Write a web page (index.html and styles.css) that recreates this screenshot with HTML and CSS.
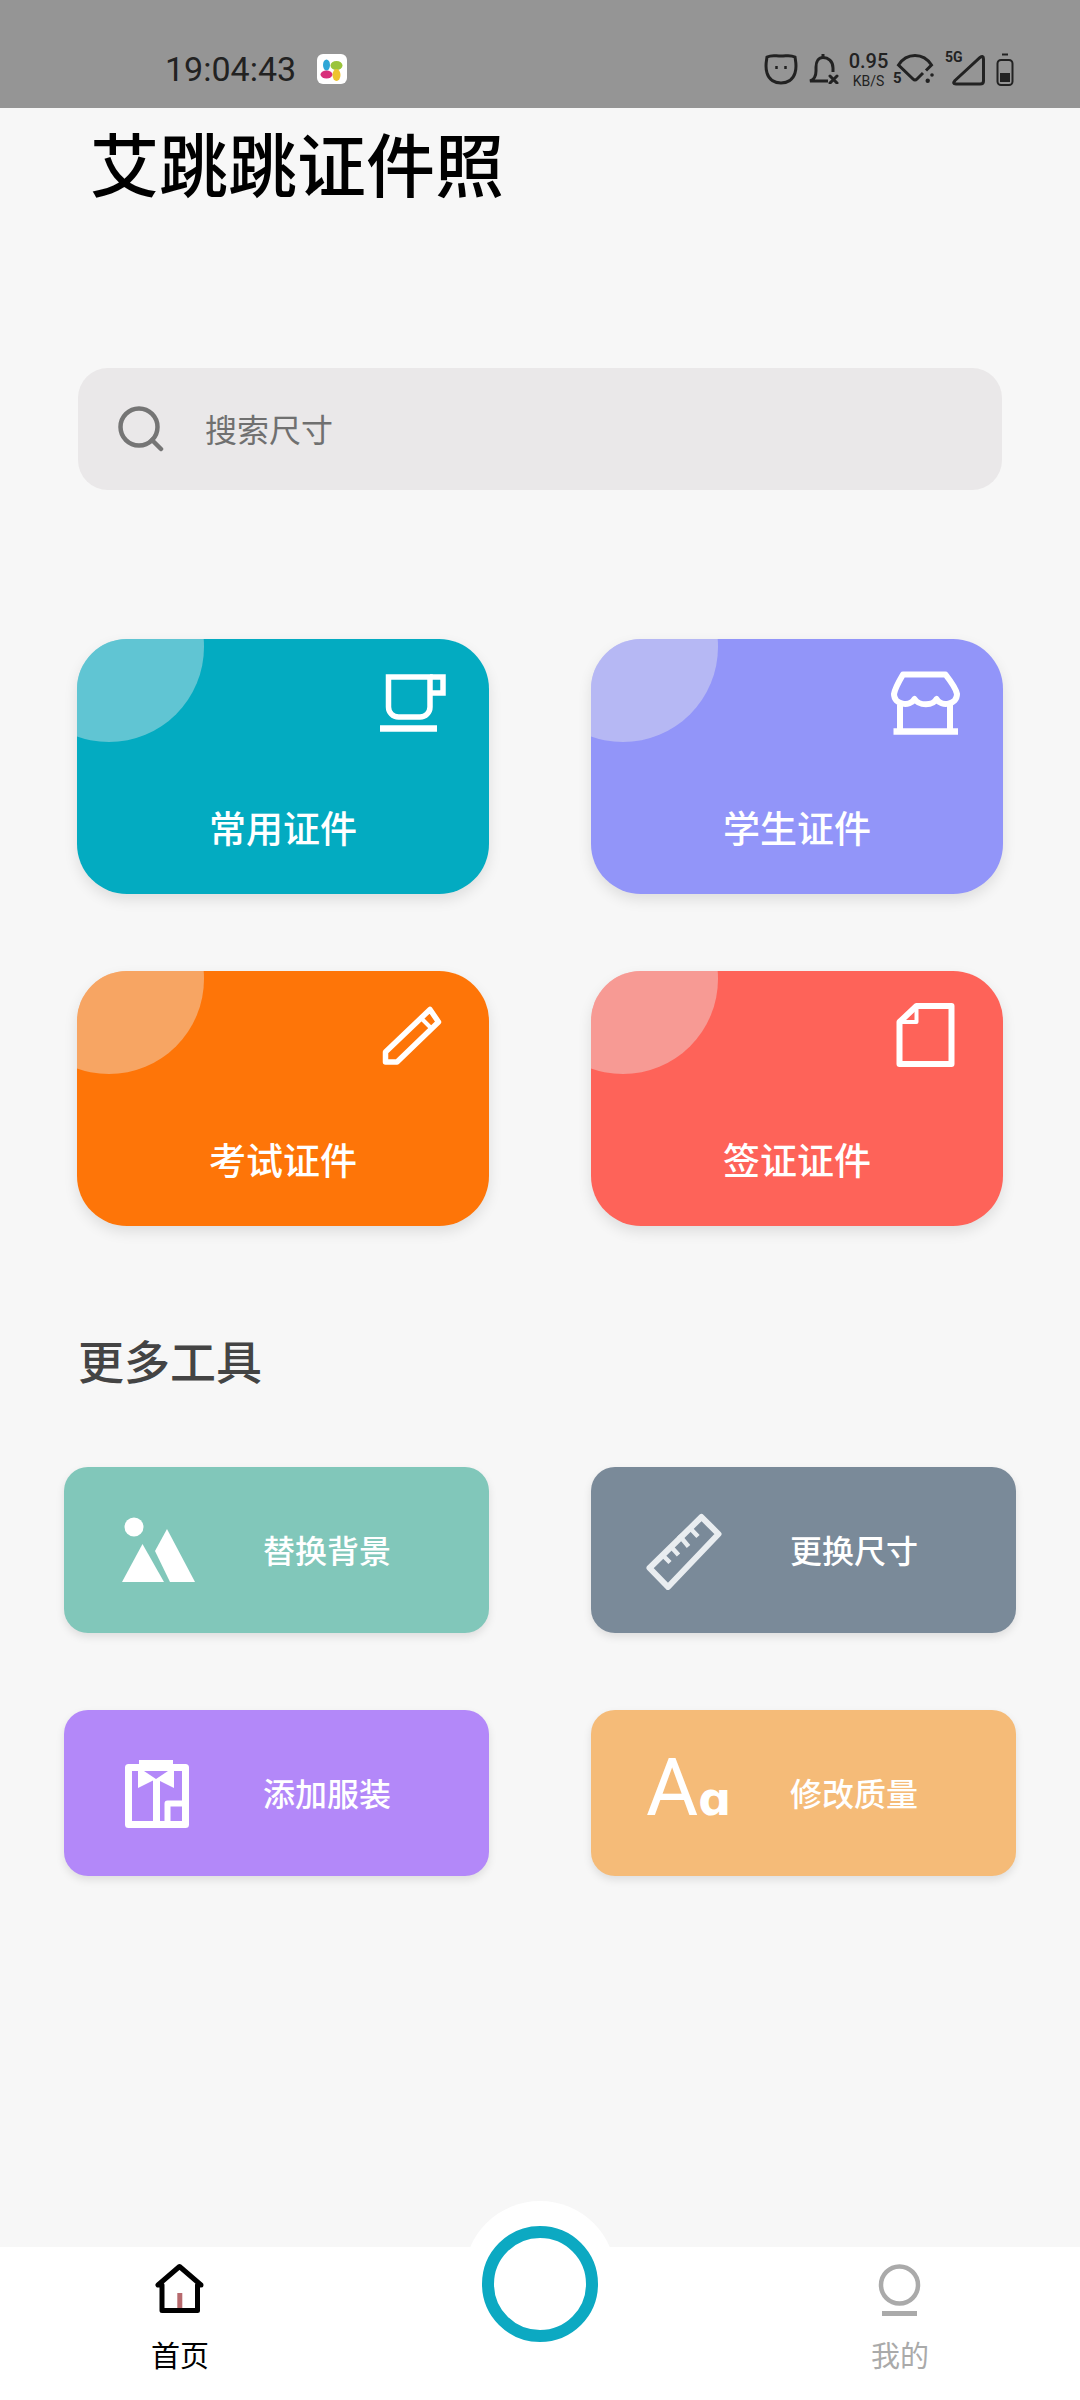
FILE: index.html
```html
<!DOCTYPE html>
<html lang="zh-CN">
<head>
  <meta charset="UTF-8">
  <meta name="viewport" content="width=device-width, initial-scale=1.0">
  <title>艾跳跳证件照</title>
  <link rel="stylesheet" href="styles.css">
</head>
<body>
<div class="page">

  <!-- status bar -->
  <div class="status-bar">
    <span class="clock">19:04:43</span>
    <svg class="app-icon" viewBox="0 0 30 30">
      <rect width="30" height="30" rx="6" fill="#fff"/>
      <ellipse cx="9.500" cy="11" rx="3.500" ry="5.500" fill="#2fa6d6"/>
      <ellipse cx="19.500" cy="11.500" rx="6" ry="4.500" fill="#9ac43c"/>
      <ellipse cx="9.500" cy="20.500" rx="6" ry="4" fill="#d8307a"/>
      <ellipse cx="19.500" cy="21" rx="4" ry="6" fill="#eec42e"/>
    </svg>
    <div class="status-icons">
      <svg class="st-cat" viewBox="0 0 34 32" fill="none" stroke="#222" stroke-width="3">
        <path d="M3 4C8 1.500 11 3 17 3C23 3 26 1.500 31 4C32 10 33 14 31 20C29 27 23 30 17 30C11 30 5 27 3 20C1 14 2 10 3 4Z"/>
        <path d="M12.500 13V16M21.500 13V16" stroke-width="2.500"/>
      </svg>
      <svg class="st-bell" viewBox="0 0 31 30" fill="none" stroke="#222" stroke-width="3">
        <path d="M20 27H2Q8 25 8 17V13C8 7 11 3.500 15 3.500C20 3.500 25 7 25 14V18"/>
        <path d="M15 0.500V3.500M22 22L29 29M29 22L22 29" stroke-linecap="round"/>
      </svg>
      <div class="st-speed">
        <span class="speed-num">0.95</span>
        <span class="speed-unit">KB/S</span>
      </div>
      <div class="st-wifi">
        <svg viewBox="0 0 42 32" fill="none" stroke="#222" stroke-width="3">
          <path d="M30 20L24 26Q22 28 20 26L5.500 12C10 5 16 2.500 22 2.500C28 2.500 34 5 38.500 12L33 17.500"/>
          <circle cx="39" cy="22" r="1.800" fill="#222" stroke="none"/>
          <circle cx="34.700" cy="27.700" r="2.200" fill="#222" stroke="none"/>
        </svg>
        <span class="wifi-num">5</span>
      </div>
      <div class="st-signal">
        <svg viewBox="0 0 41 36" fill="none" stroke="#222" stroke-width="3">
          <path d="M10 29.500L35 6.500Q38.500 4 38.500 8V30Q38.500 33 35 33H11Q7 33 10 29.500Z"/>
        </svg>
        <span class="signal-num">5G</span>
      </div>
      <svg class="st-battery" viewBox="0 0 18 33" fill="none" stroke="#222" stroke-width="2">
        <path d="M6 1.500H12"/>
        <rect x="1.500" y="7" width="15" height="25" rx="3.500"/>
        <rect x="4" y="20" width="10" height="9" fill="#222" stroke="none"/>
      </svg>
    </div>
  </div>

  <h1 class="app-title">艾跳跳证件照</h1>

  <div class="search-box">
    <svg class="search-icon" viewBox="0 0 46 46" fill="none" stroke="#757575" stroke-width="4.500" stroke-linecap="round">
      <circle cx="21" cy="21" r="18.500"/>
      <path d="M34 34L43 43"/>
    </svg>
    <span class="search-text">搜索尺寸</span>
  </div>

  <!-- certificate cards -->
  <div class="card-grid">
    <div class="card card-teal">
      <svg class="card-icon" viewBox="0 0 80 80" fill="none" stroke="#fff" stroke-width="5.500">
        <path d="M16.500 14H58V44A10 10 0 0 1 48 54H26.500A10 10 0 0 1 16.500 44Z"/>
        <path d="M58 14H71V30H58"/>
        <path d="M8 65.500H65" stroke-width="6.500"/>
      </svg>
      <span class="card-label">常用证件</span>
    </div>
    <div class="card card-violet">
      <svg class="card-icon" viewBox="0 0 80 80" fill="none" stroke="#fff" stroke-width="6" stroke-linejoin="round">
        <path d="M17 11.500H59.500Q70 25 71 31C71 42 55 44 50.500 36C47 43 33 43 28.500 36C24 44 8 42 8 31Q9 25 17 11.500Z"/>
        <path d="M14 42V68M64 42V68"/>
        <path d="M7.500 68.500H72" stroke-width="6.500"/>
      </svg>
      <span class="card-label">学生证件</span>
    </div>
    <div class="card card-orange">
      <svg class="card-icon" viewBox="0 0 80 80" fill="none" stroke="#fff" stroke-width="5.500" stroke-linejoin="round">
        <path d="M13.500 57L58 14.500L66.500 27L25 67H13.500Z"/>
        <path d="M49 23L59 33" stroke-width="4"/>
      </svg>
      <span class="card-label">考试证件</span>
    </div>
    <div class="card card-red">
      <svg class="card-icon" viewBox="0 0 80 80" fill="none" stroke="#fff" stroke-width="6" stroke-linejoin="round">
        <path d="M13.500 27L30.500 11H65.500V69H13.500Z"/>
        <path d="M30.500 11V27H13.500" stroke-width="4"/>
      </svg>
      <span class="card-label">签证证件</span>
    </div>
  </div>

  <h2 class="section-title">更多工具</h2>

  <!-- tool cards -->
  <div class="tool-grid">
    <div class="tool tool-green">
      <svg class="tool-icon" viewBox="0 0 80 80" fill="#fff">
        <circle cx="15" cy="17" r="9.500"/>
        <path d="M23.500 34L45 72H3Z"/>
        <path d="M48 19L76 72H51L36 41Z"/>
      </svg>
      <span class="tool-label">替换背景</span>
    </div>
    <div class="tool tool-slate">
      <svg class="tool-icon" viewBox="0 0 80 80" fill="none" stroke="#e9edf0" stroke-width="6" stroke-linejoin="round">
        <path d="M55.500 7L72.500 24L22 77L3.500 58Z"/>
        <path d="M43 17L52 26.500M33 25L42.500 36.500M23.500 35L32.500 45M15.500 44L24 52.500" stroke-width="4.500"/>
      </svg>
      <span class="tool-label">更换尺寸</span>
    </div>
    <div class="tool tool-purple">
      <svg class="tool-icon" viewBox="0 0 80 80" fill="none" stroke="#fff" stroke-width="7" stroke-linejoin="round">
        <path d="M9.500 14.500H66.500V71.500H9.500Z"/>
        <path d="M20 10.500H54"/>
        <path d="M19 14L37 26L19 35ZM55 14L37 26L55 35Z" fill="#fff" stroke="none"/>
        <path d="M37.500 26V72"/>
        <path d="M48.500 72V50.500H67" stroke-width="6"/>
      </svg>
      <span class="tool-label">添加服装</span>
    </div>
    <div class="tool tool-sand">
      <div class="tool-aa"><span class="aa-big">A</span><span class="aa-small">ɑ</span></div>
      <span class="tool-label">修改质量</span>
    </div>
  </div>

  <!-- bottom nav -->
  <div class="bottom-nav">
    <div class="nav-bump"></div>
    <div class="nav-ring"></div>
    <div class="nav-item">
      <svg class="nav-icon" viewBox="0 0 60 56" fill="none" stroke="#000" stroke-width="5" stroke-linejoin="round">
        <path d="M29.500 6.500L8 25H12V50.500H47.500V25H51Z"/>
        <path d="M29.800 33V48" stroke="#b76a6e" stroke-width="5"/>
      </svg>
      <span class="nav-label active">首页</span>
    </div>
    <div class="nav-item">
      <svg class="nav-icon" viewBox="0 0 60 56" fill="none" stroke="#aaa" stroke-width="4.500">
        <circle cx="29.500" cy="25" r="18.500"/>
        <path d="M12 53.500H47" stroke-width="5"/>
      </svg>
      <span class="nav-label">我的</span>
    </div>
  </div>

</div>
</body>
</html>
```

FILE: styles.css
```css
html, body {
  margin: 0;
  padding: 0;
}
body {
  font-family: "Noto Sans CJK SC", "Noto Sans", sans-serif;
}
.page {
  width: 1080px;
  height: 2400px;
  background: #f7f7f7;
  display: flex;
  flex-direction: column;
  overflow: hidden;
}

/* status bar */
.status-bar {
  height: 78px;
  padding: 30px 66px 0 165px;
  background: #959595;
  display: flex;
  align-items: center;
  flex-shrink: 0;
}
.clock {
  font-family: Roboto, sans-serif;
  font-size: 34px;
  color: #222;
  width: 131px;
  white-space: nowrap;
}
.app-icon {
  width: 30px;
  height: 30px;
  margin-left: 21px;
}
.status-icons {
  margin-left: auto;
  display: flex;
  align-items: center;
  gap: 10px;
  color: #222;
  font-family: Roboto, sans-serif;
}
.st-cat { width: 34px; height: 32px; }
.st-bell { width: 31px; height: 30px; }
.st-battery { width: 18px; height: 33px; }
.st-speed {
  width: 39px;
  display: flex;
  flex-direction: column;
  align-items: center;
}
.speed-num {
  font-size: 20px;
  line-height: 24px;
  font-weight: 500;
}
.speed-unit {
  font-size: 14px;
  line-height: 17px;
}
.st-wifi {
  position: relative;
  width: 42px;
  height: 32px;
  margin-left: -5px;
}
.st-wifi svg { width: 42px; height: 32px; }
.wifi-num {
  position: absolute;
  left: 0;
  top: 18px;
  font-size: 15px;
  line-height: 15px;
  font-weight: 700;
}
.st-signal {
  position: relative;
  width: 41px;
  height: 36px;
}
.st-signal svg { width: 41px; height: 36px; }
.signal-num {
  position: absolute;
  left: 0;
  top: -1px;
  font-size: 14px;
  line-height: 14px;
  font-weight: 700;
}

.app-title {
  margin: 20px 0 0 90px;
  font-size: 69px;
  line-height: 69px;
  font-weight: 500;
  color: #000;
}

/* search */
.search-box {
  margin: 171px 0 0 78px;
  width: 924px;
  height: 122px;
  padding-left: 40px;
  box-sizing: border-box;
  background: #eae8e9;
  border-radius: 30px;
  display: flex;
  align-items: center;
}
.search-icon {
  width: 46px;
  height: 46px;
}
.search-text {
  margin: 0 0 2px 41px;
  font-size: 32px;
  color: #707070;
}

/* cards */
.card-grid {
  margin: 149px 0 0 77px;
  display: grid;
  grid-template-columns: 412px 412px;
  grid-auto-rows: 255px;
  column-gap: 102px;
  row-gap: 77px;
}
.card {
  position: relative;
  overflow: hidden;
  border-radius: 50px;
  padding: 24px 37px 0;
  display: flex;
  flex-direction: column;
  box-shadow: 0 6px 14px rgba(0, 0, 0, 0.1);
}
.card::before {
  content: "";
  position: absolute;
  left: -63px;
  top: -87px;
  width: 190px;
  height: 190px;
  border-radius: 50%;
  background: rgba(238, 238, 238, 0.4);
}
.card-icon {
  width: 80px;
  height: 80px;
  align-self: flex-end;
}
.card-label {
  margin-top: 62px;
  align-self: center;
  font-size: 37px;
  line-height: 44px;
  font-weight: 500;
  color: #fff;
}
.card-teal { background: #03abc1; }
.card-violet { background: #9295f9; }
.card-orange { background: #fe7508; }
.card-red { background: #fe6359; }

.section-title {
  margin: 110px 0 0 78px;
  font-size: 46px;
  line-height: 46px;
  font-weight: 500;
  color: #444;
}

/* tools */
.tool-grid {
  margin: 85px 0 0 64px;
  display: grid;
  grid-template-columns: 425px 425px;
  grid-auto-rows: 166px;
  column-gap: 102px;
  row-gap: 77px;
}
.tool {
  border-radius: 24px;
  padding-left: 55px;
  display: flex;
  align-items: center;
  box-shadow: 0 4px 8px rgba(0, 0, 0, 0.1);
}
.tool-icon {
  width: 80px;
  height: 80px;
  flex-shrink: 0;
}
.tool-label {
  margin: 0 0 3px 64px;
  font-size: 32px;
  line-height: 40px;
  font-weight: 500;
  color: #fff;
}
.tool-aa {
  width: 80px;
  flex-shrink: 0;
  display: flex;
  align-items: baseline;
  color: #fff;
  font-family: Roboto, "DejaVu Sans", sans-serif;
  line-height: 80px;
}
.aa-big {
  font-size: 80px;
  font-weight: 400;
}
.aa-small {
  font-size: 46px;
  font-weight: 700;
}
.tool-green { background: #81c7ba; }
.tool-slate { background: #7a8a99; }
.tool-purple { background: #b388f9; }
.tool-sand { background: #f5bb78; }

/* bottom nav */
.bottom-nav {
  position: relative;
  margin-top: auto;
  height: 153px;
  padding: 13px 120px 0;
  box-sizing: border-box;
  background: #fff;
  display: flex;
  justify-content: space-between;
}
.nav-bump {
  position: absolute;
  left: 464px;
  top: -46px;
  width: 152px;
  height: 152px;
  border-radius: 50%;
  background: #fff;
}
.nav-ring {
  position: absolute;
  left: 482px;
  top: -21px;
  width: 116px;
  height: 116px;
  box-sizing: border-box;
  border: 12px solid #0ca9c2;
  border-radius: 50%;
}
.nav-item {
  width: 120px;
  display: flex;
  flex-direction: column;
  align-items: center;
}
.nav-icon {
  width: 60px;
  height: 56px;
}
.nav-label {
  margin-top: 20px;
  font-size: 29px;
  line-height: 36px;
  color: #aaa;
}
.nav-label.active { color: #000; }
```
